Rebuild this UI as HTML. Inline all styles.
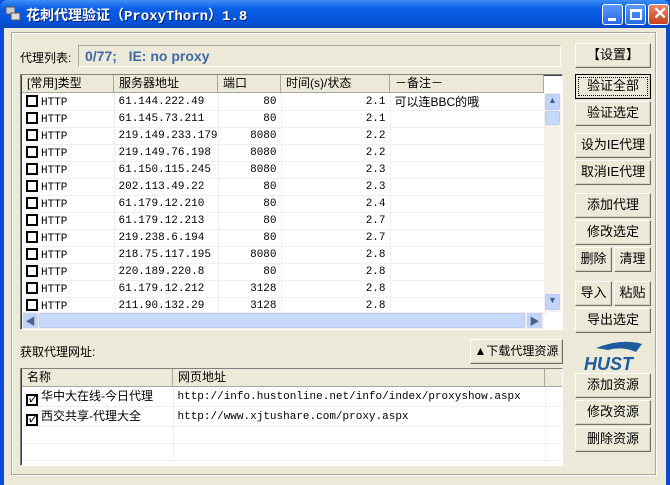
<!DOCTYPE html><html><head><meta charset="utf-8"><style>
*{box-sizing:border-box;margin:0;padding:0}
body{width:670px;height:485px;overflow:hidden;background:#0a4bd8;font-family:"Liberation Sans","Noto Sans CJK SC",sans-serif;font-size:12px;position:relative}
.a{position:absolute}
#title{left:0;top:0;width:670px;height:28px;background:linear-gradient(#3d8ef5,#0a5fe6 30%,#0552d8 80%,#0a46c0);border-radius:7px 7px 0 0}
#title span{position:absolute;left:26px;top:5px;color:#fff;font-weight:bold;font-size:14px;font-family:"Liberation Mono","Noto Sans CJK SC",monospace;text-shadow:1px 1px #0a1e7a}
.tb{top:4px;width:21px;height:21px;border:1px solid #fff;border-radius:3px;background:linear-gradient(#5a9af8,#2a6ae8)}
#client{left:4px;top:28px;width:662px;height:457px;background:#ece9d8}
#frame{left:11px;top:32px;width:645px;height:443px;border:1px solid #aca899;box-shadow:1px 1px #fff inset,1px 1px #fff}
.btn{position:absolute;height:25px;border:1px solid #003c74;border-color:#fff #716f64 #716f64 #fff;background:#ece9d8;box-shadow:-1px -1px 0 #d4d0c8 inset;text-align:center;line-height:22px;font-size:13px;color:#000}
.lv{background:#fff;border:1px solid #7f9db9;border-color:#808080 #fff #fff #808080;box-shadow:1px 1px #404040 inset}
table{border-collapse:collapse;font-family:"Liberation Mono","Noto Sans CJK SC",monospace;font-size:11px}
td{height:17px;border-bottom:1px solid #f0f0f0;border-right:1px solid #f0f0f0;padding:0 4px;white-space:nowrap;overflow:hidden}
.hd{position:absolute;top:0;height:18px;background:#ece9d8;border-right:1px solid #aca899;border-bottom:1px solid #aca899;font-size:12px;line-height:17px;padding-left:5px;font-family:"Liberation Sans","Noto Sans CJK SC",sans-serif}
.cb{display:inline-block;width:12px;height:12px;border:2px solid #000;vertical-align:-2px;margin-right:3px;background:#fff}
.r{text-align:right}
</style></head><body>
<div id="title" class="a"><svg class="a" style="left:5px;top:6px" width="16" height="16"><rect x="1" y="1" width="9" height="7" fill="#ccc" stroke="#555"/><rect x="6" y="7" width="9" height="7" fill="#ddd" stroke="#555"/></svg><span>花刺代理验证（ProxyThorn）1.8</span>
<div class="a tb" style="left:602px"><div class="a" style="left:5px;top:13px;width:8px;height:3px;background:#fff"></div></div>
<div class="a tb" style="left:625px"><div class="a" style="left:4px;top:4px;width:12px;height:11px;border:2px solid #fff;border-top-width:3px"></div></div>
<div class="a tb" style="left:648px;background:linear-gradient(#e88a6a,#c8401a)"><span style="position:absolute;left:4px;top:-1px;color:#fff;font-size:17px;font-weight:bold;text-shadow:none;font-family:'Liberation Sans'">✕</span></div>
</div>
<div id="client" class="a"></div>
<div id="frame" class="a"></div>
<div class="a" style="left:20px;top:49px;font-size:12px">代理列表:</div>
<div class="a" style="left:78px;top:45px;width:483px;height:22px;border:1px solid #aca899;border-color:#aca899 #fff #fff #aca899;color:#3c6aa8;font-weight:bold;font-size:14px;line-height:20px;padding-left:6px">0/77;&nbsp;&nbsp;&nbsp;IE: no proxy</div>

<div class="a lv" style="left:20px;top:74px;width:543px;height:256px;overflow:hidden">
<div class="hd" style="left:1px;width:92px">[常用]类型</div>
<div class="hd" style="left:93px;width:104px">服务器地址</div>
<div class="hd" style="left:197px;width:63px">端口</div>
<div class="hd" style="left:260px;width:109px">时间(s)/状态</div>
<div class="hd" style="left:369px;width:154px">－备注－</div>
<table class="a" style="left:1px;top:18px;width:522px;table-layout:fixed">
<col width="92"><col width="104"><col width="63"><col width="109"><col width="154">
<tr><td><i class="cb"></i>HTTP</td><td>61.144.222.49</td><td class="r">80</td><td class="r">2.1</td><td style="font-family:'Liberation Sans','Noto Sans CJK SC';font-size:12px">可以连BBC的哦</td></tr>
<tr><td><i class="cb"></i>HTTP</td><td>61.145.73.211</td><td class="r">80</td><td class="r">2.1</td><td></td></tr>
<tr><td><i class="cb"></i>HTTP</td><td>219.149.233.179</td><td class="r">8080</td><td class="r">2.2</td><td></td></tr>
<tr><td><i class="cb"></i>HTTP</td><td>219.149.76.198</td><td class="r">8080</td><td class="r">2.2</td><td></td></tr>
<tr><td><i class="cb"></i>HTTP</td><td>61.150.115.245</td><td class="r">8080</td><td class="r">2.3</td><td></td></tr>
<tr><td><i class="cb"></i>HTTP</td><td>202.113.49.22</td><td class="r">80</td><td class="r">2.3</td><td></td></tr>
<tr><td><i class="cb"></i>HTTP</td><td>61.179.12.210</td><td class="r">80</td><td class="r">2.4</td><td></td></tr>
<tr><td><i class="cb"></i>HTTP</td><td>61.179.12.213</td><td class="r">80</td><td class="r">2.7</td><td></td></tr>
<tr><td><i class="cb"></i>HTTP</td><td>219.238.6.194</td><td class="r">80</td><td class="r">2.7</td><td></td></tr>
<tr><td><i class="cb"></i>HTTP</td><td>218.75.117.195</td><td class="r">8080</td><td class="r">2.8</td><td></td></tr>
<tr><td><i class="cb"></i>HTTP</td><td>220.189.220.8</td><td class="r">80</td><td class="r">2.8</td><td></td></tr>
<tr><td><i class="cb"></i>HTTP</td><td>61.179.12.212</td><td class="r">3128</td><td class="r">2.8</td><td></td></tr>
<tr><td><i class="cb"></i>HTTP</td><td>211.90.132.29</td><td class="r">3128</td><td class="r">2.8</td><td></td></tr>
</table>
<div class="a" style="left:523px;top:18px;width:17px;height:219px;background:#f3f1ea"></div>
<div class="a" style="left:524px;top:19px;width:15px;height:16px;background:#c1d3fb;border:1px solid #b8cbf5;border-radius:2px;font-size:9px;text-align:center;color:#4d6185">▲</div>
<div class="a" style="left:524px;top:36px;width:15px;height:14px;background:#c8d8fb;border:1px solid #b8cbf5;border-radius:2px"></div>
<div class="a" style="left:524px;top:219px;width:15px;height:16px;background:#c1d3fb;border:1px solid #b8cbf5;border-radius:2px;font-size:9px;text-align:center;color:#4d6185">▼</div>
<div class="a" style="left:1px;top:237px;width:522px;height:17px;background:#f3f1ea"></div>
<div class="a" style="left:18px;top:238px;width:486px;height:15px;background:#c8d8fb;border:1px solid #b8cbf5;border-radius:2px"></div>
<div class="a" style="left:2px;top:238px;width:15px;height:15px;background:#c1d3fb;font-size:10px;text-align:center;color:#4d6185">◀</div>
<div class="a" style="left:506px;top:238px;width:15px;height:15px;background:#c1d3fb;font-size:10px;text-align:center;color:#4d6185">▶</div>
</div>

<div class="a" style="left:20px;top:343px">获取代理网址:</div>
<div class="btn" style="left:470px;top:339px;width:93px;font-size:12px">▲下载代理资源</div>

<div class="a lv" style="left:20px;top:368px;width:543px;height:98px;overflow:hidden">
<div class="hd" style="left:1px;width:151px">名称</div>
<div class="hd" style="left:152px;width:372px">网页地址</div>
<div class="hd" style="left:524px;width:20px"></div>
<table class="a" style="left:1px;top:18px;width:540px;table-layout:fixed">
<col width="151"><col width="372"><col width="17">
<tr><td style="font-family:'Liberation Sans','Noto Sans CJK SC';font-size:12px"><i class="cb" style="text-align:center;line-height:7px;font-size:10px;font-weight:bold">✓</i>华中大在线-今日代理</td><td>http://info.hustonline.net/info/index/proxyshow.aspx</td><td></td></tr>
<tr><td style="font-family:'Liberation Sans','Noto Sans CJK SC';font-size:12px"><i class="cb" style="text-align:center;line-height:7px;font-size:10px;font-weight:bold">✓</i>西交共享-代理大全</td><td>http://www.xjtushare.com/proxy.aspx</td><td></td></tr>
<tr><td></td><td></td><td></td></tr><tr><td></td><td></td><td></td></tr>
</table>
</div>

<div class="btn" style="left:575px;top:43px;width:76px">【设置】</div>
<div class="btn" style="left:575px;top:74px;width:76px;border:1px solid #000;outline:1px dotted #000;outline-offset:-4px">验证全部</div>
<div class="btn" style="left:575px;top:101px;width:76px">验证选定</div>
<div class="btn" style="left:575px;top:133px;width:76px">设为IE代理</div>
<div class="btn" style="left:575px;top:160px;width:76px">取消IE代理</div>
<div class="btn" style="left:575px;top:193px;width:76px">添加代理</div>
<div class="btn" style="left:575px;top:220px;width:76px">修改选定</div>
<div class="btn" style="left:575px;top:247px;width:37px">删除</div>
<div class="btn" style="left:614px;top:247px;width:37px">清理</div>
<div class="btn" style="left:575px;top:281px;width:37px">导入</div>
<div class="btn" style="left:614px;top:281px;width:37px">粘贴</div>
<div class="btn" style="left:575px;top:308px;width:76px">导出选定</div>
<svg class="a" style="left:582px;top:338px" width="62" height="34"><path d="M14 10 Q40 0 60 6 L54 14 Q40 8 26 12 Z" fill="#1e5a9e"/><text x="2" y="32" font-family="Liberation Sans" font-weight="bold" font-style="italic" font-size="18" fill="#1e5a9e">HUST</text></svg>
<div class="btn" style="left:575px;top:373px;width:76px">添加资源</div>
<div class="btn" style="left:575px;top:400px;width:76px">修改资源</div>
<div class="btn" style="left:575px;top:427px;width:76px">删除资源</div>
</body></html>
